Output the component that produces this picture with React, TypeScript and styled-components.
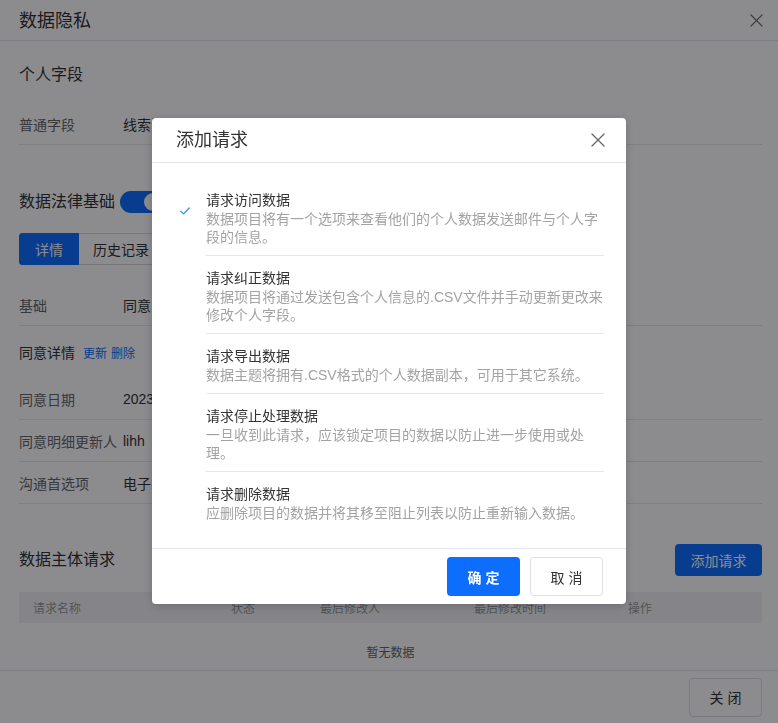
import React, { useState } from 'react'
import styled, { createGlobalStyle } from 'styled-components'

const GlobalStyle = createGlobalStyle`
  html, body {
    margin: 0;
    padding: 0;
    height: 100%;
    font-family: "Liberation Sans", "Noto Sans CJK SC", sans-serif;
    color: #333;
    background: #fff;
  }
  * { box-sizing: border-box; }
`

const requestTypes = [
  {
    key: 'access',
    title: '请求访问数据',
    desc: '数据项目将有一个选项来查看他们的个人数据发送邮件与个人字段的信息。',
  },
  {
    key: 'rectify',
    title: '请求纠正数据',
    desc: '数据项目将通过发送包含个人信息的.CSV文件并手动更新更改来修改个人字段。',
  },
  {
    key: 'export',
    title: '请求导出数据',
    desc: '数据主题将拥有.CSV格式的个人数据副本，可用于其它系统。',
  },
  {
    key: 'stop',
    title: '请求停止处理数据',
    desc: '一旦收到此请求，应该锁定项目的数据以防止进一步使用或处理。',
  },
  {
    key: 'delete',
    title: '请求删除数据',
    desc: '应删除项目的数据并将其移至阻止列表以防止重新输入数据。',
  },
]

const consentRows = [
  { label: '同意日期', value: '2023-03-15 10:24:36' },
  { label: '同意明细更新人', value: 'lihh' },
  { label: '沟通首选项', value: '电子邮件' },
]

const columns = ['请求名称', '状态', '最后修改人', '最后修改时间', '操作']

const CloseIcon = ({ size = 14 }: { size?: number }) => (
  <svg width={size} height={size} viewBox="0 0 14 14" fill="none">
    <path d="M1 1L13 13M13 1L1 13" stroke="currentColor" strokeWidth="1.3" strokeLinecap="round" />
  </svg>
)

const App = () => {
  const [selected, setSelected] = useState('access')

  return (
    <>
      <GlobalStyle />
      <Page>
        <TopBar>
          <TopTitle>数据隐私</TopTitle>
          <IconButton type="button">
            <CloseIcon size={13} />
          </IconButton>
        </TopBar>

        <Content>
          <SectionTitle>个人字段</SectionTitle>
          <FieldRow>
            <Label>普通字段</Label>
            <Value>线索池、国家</Value>
            <Label>敏感字段</Label>
            <Value>电话、手机</Value>
          </FieldRow>

          <LegalHeading>
            数据法律基础
            <Toggle $on />
          </LegalHeading>

          <Tabs>
            <Tab $active>详情</Tab>
            <Tab>历史记录</Tab>
          </Tabs>

          <InfoRow $first>
            <Label>基础</Label>
            <Value>同意</Value>
          </InfoRow>

          <SubHeading>
            同意详情
            <LinkText>更新</LinkText>
            <LinkText>删除</LinkText>
          </SubHeading>

          {consentRows.map(row => (
            <InfoRow key={row.label}>
              <Label>{row.label}</Label>
              <Value>{row.value}</Value>
            </InfoRow>
          ))}

          <RequestsHead>
            <SectionTitle as="div">数据主体请求</SectionTitle>
            <PrimaryButton type="button">添加请求</PrimaryButton>
          </RequestsHead>

          <TableHead>
            {columns.map(c => (
              <HeadCell key={c}>{c}</HeadCell>
            ))}
          </TableHead>
          <Empty>暂无数据</Empty>
        </Content>

        <Footer>
          <PlainButton type="button">关闭</PlainButton>
        </Footer>
      </Page>

      <Mask>
        <Modal>
          <ModalHeader>
            <ModalTitle>添加请求</ModalTitle>
            <IconButton type="button">
              <CloseIcon size={14} />
            </IconButton>
          </ModalHeader>
          <ModalBody>
            {requestTypes.map((r, i) => (
              <Option key={r.key} onClick={() => setSelected(r.key)}>
                <CheckCol>
                  {selected === r.key && (
                    <svg width="10" height="8" viewBox="0 0 10 8" fill="none">
                      <path d="M0.8 4.2L3.6 6.9L9.2 1" stroke="#3a8ee6" strokeWidth="1.3" strokeLinecap="round" strokeLinejoin="round" />
                    </svg>
                  )}
                </CheckCol>
                <OptionText $last={i === requestTypes.length - 1}>
                  <OptionTitle>{r.title}</OptionTitle>
                  <OptionDesc>{r.desc}</OptionDesc>
                </OptionText>
              </Option>
            ))}
          </ModalBody>
          <ModalFooter>
            <PrimaryButton type="button" $big>确定</PrimaryButton>
            <PlainButton type="button">取消</PlainButton>
          </ModalFooter>
        </Modal>
      </Mask>
    </>
  )
}

export default App

const Page = styled.div`
  height: 100vh;
  display: flex;
  flex-direction: column;
  background: #fff;
`

const TopBar = styled.div`
  height: 41px;
  flex-shrink: 0;
  display: flex;
  align-items: center;
  justify-content: space-between;
  padding: 0 14px 0 19px;
  border-bottom: 1px solid #e4e6eb;
`

const TopTitle = styled.div`
  font-size: 18px;
  line-height: 24px;
  color: #333;
  padding-top: 1px;
`

const IconButton = styled.button`
  border: none;
  background: transparent;
  padding: 0;
  display: flex;
  align-items: center;
  justify-content: center;
  width: 16px;
  height: 16px;
  color: #666;
  cursor: pointer;
`

const Content = styled.div`
  flex: 1;
  overflow: hidden;
  padding: 0 16px 0 19px;
  display: flex;
  flex-direction: column;
`

const SectionTitle = styled.h3`
  margin: 23px 0 0;
  font-size: 16px;
  font-weight: 400;
  line-height: 22px;
  color: #333;
`

const Label = styled.span`
  font-size: 14px;
  color: #666;
`

const Value = styled.span`
  font-size: 14px;
  color: #333;
`

const FieldRow = styled.div`
  margin-top: 17px;
  height: 42px;
  display: grid;
  grid-template-columns: 104px 269px 110px 1fr;
  align-items: center;
  border-bottom: 1px solid #e8e8e8;
`

const LegalHeading = styled.div`
  margin-top: 45px;
  display: flex;
  align-items: center;
  gap: 5px;
  font-size: 16px;
  line-height: 24px;
  color: #333;
`

const Toggle = styled.span<{ $on?: boolean }>`
  position: relative;
  width: 44px;
  height: 22px;
  border-radius: 11px;
  background: ${p => (p.$on ? '#0d6efd' : '#c0c4cc')};

  &::after {
    content: '';
    position: absolute;
    top: 2px;
    left: ${p => (p.$on ? '24px' : '2px')};
    width: 18px;
    height: 18px;
    border-radius: 50%;
    background: #fff;
  }
`

const Tabs = styled.div`
  margin-top: 19px;
  display: flex;
`

const Tab = styled.div<{ $active?: boolean }>`
  height: 32px;
  padding: 0 ${p => (p.$active ? '15px' : '14px')};
  display: flex;
  align-items: center;
  font-size: 14px;
  color: ${p => (p.$active ? '#fff' : '#333')};
  background: ${p => (p.$active ? '#0d6efd' : '#fff')};
  border: 1px solid ${p => (p.$active ? '#0d6efd' : '#d9d9d9')};
  border-radius: ${p => (p.$active ? '3px 0 0 3px' : '0 3px 3px 0')};
  border-left-width: ${p => (p.$active ? '1px' : '0')};
`

const InfoRow = styled.div<{ $first?: boolean }>`
  margin-top: ${p => (p.$first ? '19px' : '0')};
  height: 42px;
  display: grid;
  grid-template-columns: 104px 1fr;
  align-items: center;
  border-bottom: 1px solid #e8e8e8;
`

const SubHeading = styled.div`
  height: 52px;
  display: flex;
  align-items: center;
  gap: 4px;
  font-size: 14px;
  color: #333;
`

const LinkText = styled.a`
  font-size: 12px;
  color: #0d6efd;
  cursor: pointer;

  &:first-of-type {
    margin-left: 4px;
  }
`

const RequestsHead = styled.div`
  margin-top: 40px;
  display: flex;
  align-items: center;
  justify-content: space-between;

  ${SectionTitle} {
    margin: 0;
  }
`

const PrimaryButton = styled.button<{ $big?: boolean }>`
  height: ${p => (p.$big ? '39px' : '32px')};
  width: ${p => (p.$big ? '73px' : '87px')};
  border: none;
  border-radius: 4px;
  background: #0d6efd;
  color: #fff;
  font-family: inherit;
  font-size: 14px;
  font-weight: ${p => (p.$big ? 600 : 400)};
  letter-spacing: ${p => (p.$big ? '4px' : '0')};
  text-indent: ${p => (p.$big ? '4px' : '0')};
  cursor: pointer;
`

const PlainButton = styled.button`
  height: 39px;
  width: 73px;
  border: 1px solid #dcdfe6;
  border-radius: 4px;
  background: #fff;
  color: #333;
  font-family: inherit;
  font-size: 14px;
  letter-spacing: 4px;
  text-indent: 4px;
  cursor: pointer;
`

const TableHead = styled.div`
  margin-top: 16px;
  height: 31px;
  display: grid;
  grid-template-columns: 198px 89px 154px 154px 1fr;
  align-items: center;
  background: #f2f3f5;
  flex-shrink: 0;
`

const HeadCell = styled.div`
  padding-left: 14px;
  font-size: 12px;
  color: #999;
`

const Empty = styled.div`
  padding-top: 21px;
  text-align: center;
  font-size: 12px;
  line-height: 18px;
  color: #666;
`

const Footer = styled.div`
  flex-shrink: 0;
  height: 53px;
  border-top: 1px solid #e4e6eb;
  display: flex;
  align-items: center;
  justify-content: flex-end;
  padding: 0 16px;
`

const Mask = styled.div`
  position: fixed;
  inset: 0;
  background: rgba(0, 0, 6, 0.45);
  display: flex;
  justify-content: center;
  align-items: flex-start;
  padding-top: 118px;
`

const Modal = styled.div`
  width: 474px;
  background: #fff;
  border-radius: 4px;
  box-shadow: 0 2px 10px rgba(0, 0, 0, 0.2);
  display: flex;
  flex-direction: column;
`

const ModalHeader = styled.div`
  height: 45px;
  display: flex;
  align-items: center;
  justify-content: space-between;
  padding: 0 20px 0 24px;
  border-bottom: 1px solid #e4e6eb;
`

const ModalTitle = styled.div`
  font-size: 18px;
  line-height: 24px;
  color: #333;
`

const ModalBody = styled.div`
  padding: 15px 22px 17px 24px;
`

const Option = styled.div`
  display: flex;
  cursor: pointer;
`

const CheckCol = styled.div`
  width: 30px;
  flex-shrink: 0;
  padding: 23px 0 0 4px;
`

const OptionText = styled.div<{ $last?: boolean }>`
  flex: 1;
  padding: 12px 0 9px;
  border-bottom: ${p => (p.$last ? 'none' : '1px solid #e6e6e6')};
`

const OptionTitle = styled.div`
  font-size: 14px;
  line-height: 20px;
  color: #333;
`

const OptionDesc = styled.div`
  font-size: 14px;
  line-height: 18px;
  color: #a3a3a3;
`

const ModalFooter = styled.div`
  height: 56px;
  border-top: 1px solid #e4e6eb;
  display: flex;
  align-items: center;
  justify-content: flex-end;
  gap: 10px;
  padding: 0 23px;
`
